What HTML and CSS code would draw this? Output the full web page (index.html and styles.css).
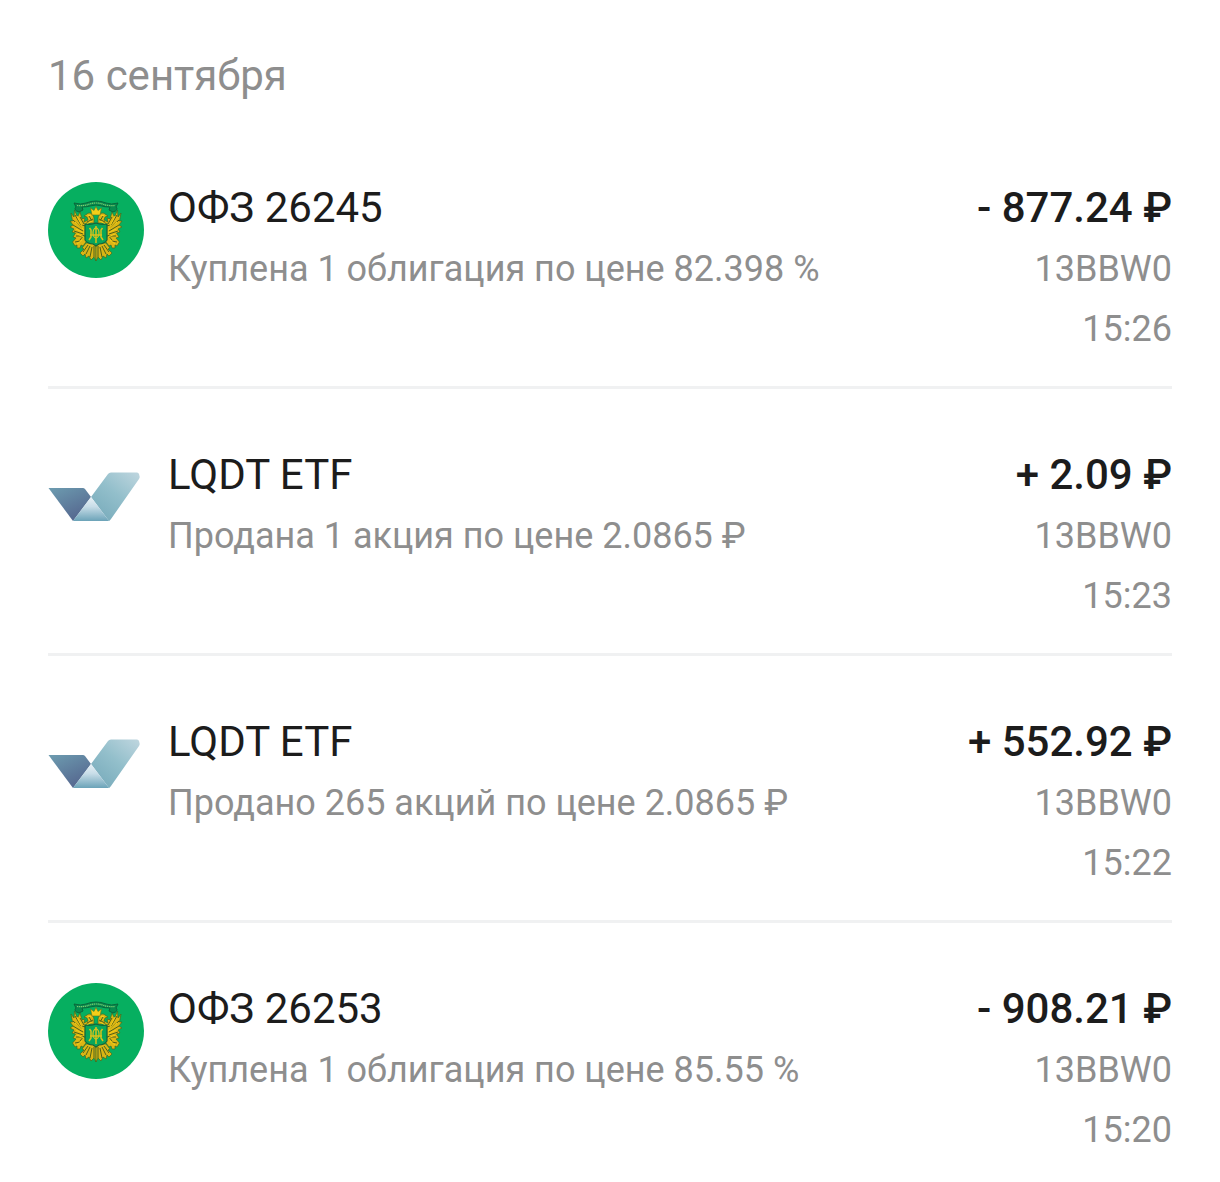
FILE: index.html
```
<!DOCTYPE html>
<html lang="ru">
<head>
<meta charset="utf-8">
<meta name="viewport" content="width=device-width, initial-scale=1">
<title>История операций</title>
<link rel="stylesheet" href="styles.css">
</head>
<body>
<svg class="defs" aria-hidden="true">
  <defs>
    <linearGradient id="lg-left" x1="0" y1="0" x2="0.6" y2="1">
      <stop offset="0" stop-color="#6d9cb0"/>
      <stop offset="1" stop-color="#55678f"/>
    </linearGradient>
    <linearGradient id="lg-mid" x1="0" y1="0" x2="0" y2="1">
      <stop offset="0" stop-color="#e8f1f6"/>
      <stop offset="0.4" stop-color="#c8dde8"/>
      <stop offset="1" stop-color="#6ba3b8"/>
    </linearGradient>
    <linearGradient id="lg-right" x1="1" y1="0" x2="0.2" y2="1">
      <stop offset="0" stop-color="#bfd6df"/>
      <stop offset="0.5" stop-color="#93bfcb"/>
      <stop offset="1" stop-color="#78abbb"/>
    </linearGradient>
    <symbol id="etf" viewBox="0 0 96 96">
      <path fill="url(#lg-left)" d="M0.500 39H35Q36 39 37 40L43 48 25 72Z"/>
      <path fill="url(#lg-right)" d="M43 48L60 25Q61 23.500 63 23.500H89Q90.500 23.500 91 25L91.500 27Q92 28.500 91 30L63 70Q61.500 72 61 72Z"/>
      <path fill="url(#lg-mid)" d="M43 48L61 72H25Z"/>
    </symbol>
    <g id="eagle-half">
      <path fill="#dcb614" stroke="#3f6a22" stroke-width="0.700" d="M46 36C45 31 41 30 39 32L36 34 39 35 40 38 36 40 37 36 34 37 32 30 29.500 35 26.500 28 26 35 23 31 24.500 39 22 39 25 43 22 45 26 47 24 50 27.500 51 25 55 28 56 24.500 60 27 64 29 63 29 66 32 66 33 63 35 64 38 60V41H46Z"/>
      <path fill="none" stroke="#4f611a" stroke-width="1" d="M27 33L33 43 38 44M25 38L34 46M25 43L35 49M26 49L35 52M28 54L37 54M32 35L36 42M41 34L44 39M39 40L45 37M32 58L36 53M27 60L32 59"/>
      <path fill="none" stroke="#f4cd18" stroke-width="1" d="M29 34L34 44M27 40L36 48M28 47L36 51M40 33.500H43M37 43L44 39M29 52L36 55M29 62L34 58"/>
      <path fill="#d9b515" stroke="#3f6a22" stroke-width="0.700" d="M38 61L34 66 36 67 32 71 35 74 37 72 38 76 41 74 43 78 46 75 48 79V61Z"/>
      <path fill="none" stroke="#4f611a" stroke-width="1" d="M35 70L40 63M38 72L42 64M42 75L44 65M46 75L46 64"/>
    </g>
    <symbol id="ofz" viewBox="0 0 96 96">
      <circle cx="48" cy="48" r="48" fill="#06af60"/>
      <use href="#eagle-half"/>
      <use href="#eagle-half" transform="translate(96 0) scale(-1 1)"/>
      <path fill="#f5ce18" stroke="#68751a" stroke-width="0.600" d="M44 33L42.500 26 46 28.500 48 24.500 50 28.500 53.500 26 52 33Z"/>
      <path fill="#078c4e" stroke="#0b6038" stroke-width="0.900" d="M26 21Q33 23 38 21Q48 17 58 21Q63 23 70 21L68 25Q71 28 65 30L61 28 62 25Q56 25 54 24Q48 22 42 24Q39 25 34 25L35 28 31 30Q25 28 28 25Z"/>
      <path fill="none" stroke="#83c970" stroke-width="1.200" stroke-dasharray="1.200 0.700" d="M29 23.500Q36 24 40 22.500Q48 19.500 56 22.500Q60 24 67 23.500"/>
      <path fill="#08a65a" stroke="#17613a" stroke-width="1.200" d="M37 42Q43 43 48 41Q53 43 59 42V58Q56 62 51 62L48 64 45 62Q40 62 37 58Z"/>
      <path fill="none" stroke="#d8c21b" stroke-width="1.500" d="M48 44V61M41.500 46L43 48V55L41 58M54.500 46L53 48V55L55 58M42 53H54"/>
      <ellipse cx="48" cy="51" rx="3" ry="5" fill="none" stroke="#d8c21b" stroke-width="1.300"/>
    </symbol>
  </defs>
</svg>
<main class="history">
  <h1 class="date">16 сентября</h1>
  <ul class="list">
    <li class="row">
      <svg class="logo" aria-hidden="true"><use href="#ofz"/></svg>
      <div class="info">
        <h2 class="name">ОФЗ 26245</h2>
        <p class="note">Куплена 1 облигация по цене 82.398 %</p>
      </div>
      <div class="summary">
        <p class="amount">- 877.24 ₽</p>
        <p class="note">13BBW0</p>
        <p class="note">15:26</p>
      </div>
    </li>
    <li class="row">
      <svg class="logo" aria-hidden="true"><use href="#etf"/></svg>
      <div class="info">
        <h2 class="name">LQDT ETF</h2>
        <p class="note">Продана 1 акция по цене 2.0865 ₽</p>
      </div>
      <div class="summary">
        <p class="amount">+ 2.09 ₽</p>
        <p class="note">13BBW0</p>
        <p class="note">15:23</p>
      </div>
    </li>
    <li class="row">
      <svg class="logo" aria-hidden="true"><use href="#etf"/></svg>
      <div class="info">
        <h2 class="name">LQDT ETF</h2>
        <p class="note">Продано 265 акций по цене 2.0865 ₽</p>
      </div>
      <div class="summary">
        <p class="amount">+ 552.92 ₽</p>
        <p class="note">13BBW0</p>
        <p class="note">15:22</p>
      </div>
    </li>
    <li class="row">
      <svg class="logo" aria-hidden="true"><use href="#ofz"/></svg>
      <div class="info">
        <h2 class="name">ОФЗ 26253</h2>
        <p class="note">Куплена 1 облигация по цене 85.55 %</p>
      </div>
      <div class="summary">
        <p class="amount">- 908.21 ₽</p>
        <p class="note">13BBW0</p>
        <p class="note">15:20</p>
      </div>
    </li>
  </ul>
</main>
</body>
</html>
```
FILE: styles.css
```
* {
  box-sizing: border-box;
}

body,
h1,
h2,
p,
ul {
  margin: 0;
  padding: 0;
}

body {
  background: #fff;
  color: #1c1c1c;
  font-family: Roboto, "Liberation Sans", sans-serif;
}

.defs {
  position: absolute;
  width: 0;
  height: 0;
}

.history {
  padding: 46px 48px 0;
}

.date {
  color: #8e8e8e;
  font-size: 42px;
  font-weight: 400;
  line-height: 60px;
}

.list {
  padding-top: 16px;
  list-style: none;
}

.row {
  display: flex;
  gap: 24px;
  padding: 56px 0 27px;
  border-bottom: 3px solid #f0f1f2;
}

.row:last-child {
  padding-bottom: 16px;
  border-bottom: 0;
}

.logo {
  flex: none;
  width: 96px;
  height: 96px;
  margin-top: 4px;
}

.info {
  flex: 1;
  min-width: 0;
}

.summary {
  flex: none;
  text-align: right;
}

.name,
.amount {
  margin-bottom: 1px;
  font-size: 42px;
  font-weight: 400;
  line-height: 60px;
}

.amount {
  font-weight: 500;
}

.note {
  color: #8e8e8e;
  font-size: 36px;
  line-height: 60px;
}
```
